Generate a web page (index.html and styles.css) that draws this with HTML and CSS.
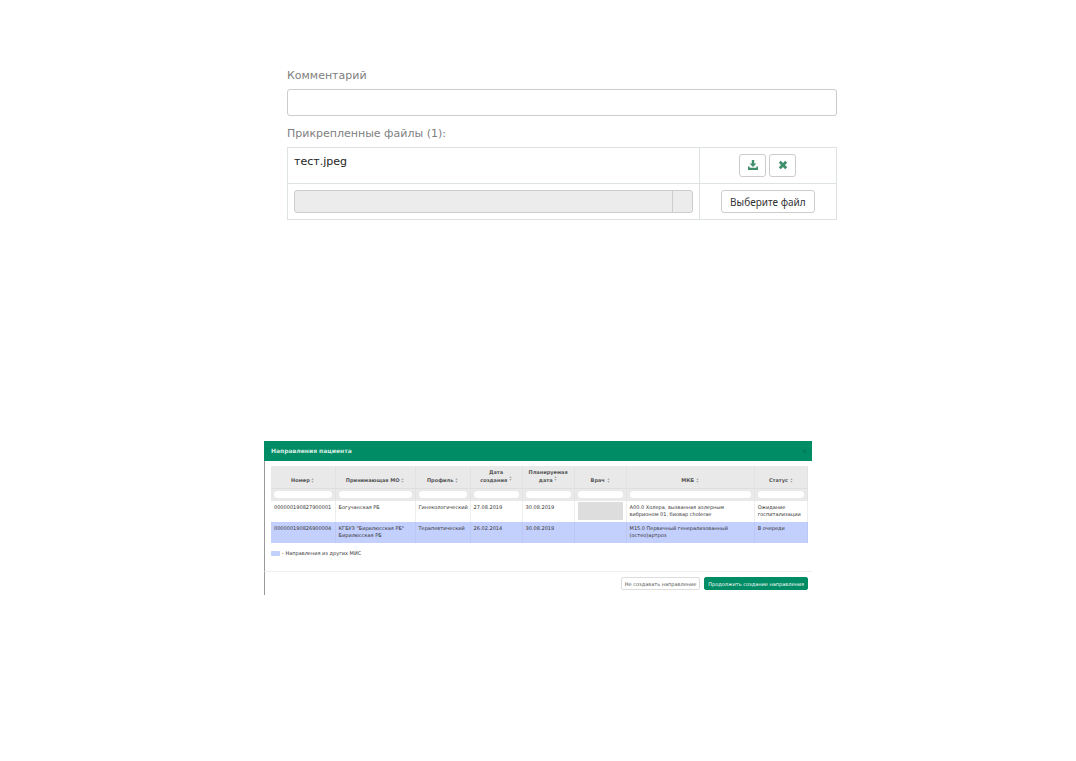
FILE: index.html
```html
<!DOCTYPE html>
<html lang="ru">
<head>
    <meta charset="UTF-8">
    <title>Направления пациента</title>
    <meta name="viewport" content="width=device-width, initial-scale=1.0">
    <link rel="stylesheet" href="styles.css">
</head>
<body>
    <svg class="sprite" aria-hidden="true">
        <symbol id="sort" viewBox="0 0 4 6">
            <path d="M2 0 L3.6 2.4 H0.4 Z M2 6 L0.4 3.6 H3.6 Z"/>
        </symbol>
    </svg>

    <form class="attachments">
        <label class="field-label" for="comment">Комментарий</label>
        <input class="comment" type="text" id="comment">
        <label class="field-label" for="file-name">Прикрепленные файлы (1):</label>
        <table class="files">
            <tr>
                <td class="file-name">тест.jpeg</td>
                <td class="file-actions">
                    <button type="button" class="btn btn-icon" aria-label="Скачать">
                        <svg width="10" height="10" viewBox="0 0 10 10"><path d="M3.8 0h2.4v3.5h2.2L5 7 1.6 3.5h2.2z M0 6.6h1.6v1.2h6.8V6.6H10V10H0z"/></svg>
                    </button>
                    <button type="button" class="btn btn-icon" aria-label="Удалить">
                        <svg width="10" height="10" viewBox="0 0 10 10"><path d="M.8 2.8l2-2L5 3l2.2-2.2 2 2L7 5l2.2 2.2-2 2L5 7 2.8 9.2l-2-2L3 5z"/></svg>
                    </button>
                </td>
            </tr>
            <tr>
                <td>
                    <div class="file-input">
                        <input type="text" id="file-name" disabled>
                        <span class="addon"></span>
                    </div>
                </td>
                <td class="file-actions"><button type="button" class="btn">Выберите файл</button></td>
            </tr>
        </table>
    </form>

    <section class="modal">
        <header class="modal-header">
            <h1>Направления пациента</h1>
            <button type="button" class="close" aria-label="Закрыть">×</button>
        </header>
        <div class="modal-body">
            <table class="referrals">
                <colgroup>
                    <col class="col-number"><col class="col-org"><col class="col-profile"><col class="col-date">
                    <col class="col-date"><col class="col-date"><col class="col-mkb"><col class="col-status">
                </colgroup>
                <thead>
                    <tr>
                        <th>Номер <svg class="sort"><use href="#sort"/></svg></th>
                        <th>Принимающая МО <svg class="sort"><use href="#sort"/></svg></th>
                        <th>Профиль <svg class="sort"><use href="#sort"/></svg></th>
                        <th>Дата<br>создания <svg class="sort sort-up"><use href="#sort"/></svg></th>
                        <th>Планируемая<br>дата <svg class="sort sort-up"><use href="#sort"/></svg></th>
                        <th>Врач <svg class="sort"><use href="#sort"/></svg></th>
                        <th>МКБ <svg class="sort"><use href="#sort"/></svg></th>
                        <th>Статус <svg class="sort"><use href="#sort"/></svg></th>
                    </tr>
                    <tr class="filters">
                        <td><input type="text" aria-label="Номер"></td>
                        <td><input type="text" aria-label="Принимающая МО"></td>
                        <td><input type="text" aria-label="Профиль"></td>
                        <td><input type="text" aria-label="Дата создания"></td>
                        <td><input type="text" aria-label="Планируемая дата"></td>
                        <td><input type="text" aria-label="Врач"></td>
                        <td><input type="text" aria-label="МКБ"></td>
                        <td><input type="text" aria-label="Статус"></td>
                    </tr>
                </thead>
                <tbody>
                    <tr>
                        <td>000000190827900001</td>
                        <td>Богучанская РБ</td>
                        <td>Гинекологический</td>
                        <td>27.08.2019</td>
                        <td>30.08.2019</td>
                        <td class="doctor"><div class="masked"></div></td>
                        <td>A00.0 Холера, вызванная холерным<br>вибрионом 01, биовар cholerae</td>
                        <td>Ожидание<br>госпитализации</td>
                    </tr>
                    <tr class="external">
                        <td>000000190826900004</td>
                        <td>КГБУЗ "Бирилюсская РБ"<br>Бирилюсская РБ</td>
                        <td>Терапевтический</td>
                        <td>26.02.2014</td>
                        <td>30.08.2019</td>
                        <td></td>
                        <td>M15.0 Первичный генерализованный<br>(остео)артроз</td>
                        <td>В очереди</td>
                    </tr>
                </tbody>
            </table>
            <div class="legend"><span class="swatch"></span>- Направления из других МИС</div>
        </div>
        <footer class="modal-footer">
            <button type="button" class="btn-small">Не создавать направление</button>
            <button type="button" class="btn-small btn-primary">Продолжить создание направления</button>
        </footer>
    </section>
</body>
</html>
```

FILE: styles.css
```css
* {
    box-sizing: border-box;
}
body {
    margin: 0;
    padding: 68px 16px;
    background: #fff;
    color: #333;
    font-family: Verdana, "DejaVu Sans", sans-serif;
    font-size: 11px;
}
input, button {
    font-family: inherit;
}
table {
    width: 100%;
    border-collapse: collapse;
}
td, th {
    padding: 0;
}
.sprite {
    position: absolute;
    width: 0;
    height: 0;
}

/* attached files form */
.attachments {
    max-width: 598px;
    margin: 0 auto;
    padding-left: 48px;
}
.field-label {
    display: block;
    line-height: 15px;
    color: #808080;
}
.comment {
    display: block;
    width: 100%;
    height: 27px;
    margin: 6px 0 10px;
    padding: 0 6px;
    border: 1px solid #ccc;
    border-radius: 3px;
    font-size: 11px;
}
.files {
    margin-top: 6px;
}
.files td {
    height: 36px;
    padding: 6px;
    border: 1px solid #dde4df;
}
.files .file-name {
    vertical-align: top;
    line-height: 16px;
    color: #222;
}
.files .file-actions {
    width: 25%;
    text-align: center;
}
.file-actions {
    font-size: 0;
}
.btn {
    height: 23px;
    padding: 0 8px;
    background: #fff;
    border: 1px solid #ccc;
    border-radius: 3px;
    color: #333;
    font-family: "Noto Sans", sans-serif;
    font-size: 10px;
    vertical-align: top;
}
.btn-icon {
    display: inline-flex;
    align-items: center;
    justify-content: center;
    width: 27px;
    padding: 0 0 2px;
    fill: #3f8e6a;
}
.btn-icon + .btn-icon {
    margin-left: 3px;
}
.file-input {
    display: flex;
    height: 23px;
    background: #ececec;
    border: 1px solid #ccc;
    border-radius: 3px;
}
.file-input input {
    flex: 1;
    min-width: 0;
    background: none;
    border: none;
}
.addon {
    width: 20px;
    border-left: 1px solid #ccc;
}

/* referrals dialog */
.modal {
    max-width: 548px;
    margin: 221px auto 0;
    font-size: 5px;
    line-height: 7px;
}
.modal-header {
    display: flex;
    align-items: center;
    justify-content: space-between;
    height: 20px;
    padding: 0 5px 1px 7px;
    background: #008c64;
}
.modal-header h1 {
    margin: 0;
    color: #d5efe5;
    font-size: 6px;
    font-weight: bold;
}
.close {
    padding: 0;
    background: none;
    border: none;
    color: #00694a;
    font-size: 6px;
    line-height: 6px;
}
.modal-body,
.modal-footer {
    border-left: 1px solid #999;
}
.modal-body {
    padding: 5px 4px 14px 6px;
}
.referrals {
    table-layout: fixed;
}
.col-number { width: 12%; }
.col-org { width: 15%; }
.col-profile { width: 55px; }
.col-date { width: 52px; }
.col-mkb { width: 24%; }
.col-status { width: 10%; }
.referrals thead {
    background: #e9e9e9;
}
.referrals th {
    height: 22px;
    padding-bottom: 4px;
    border-right: 1px solid #e2e2e2;
    vertical-align: bottom;
    color: #555;
}
.sort {
    width: 3px;
    height: 5px;
    fill: #aaa;
    vertical-align: -1px;
}
.sort-up {
    vertical-align: 1px;
}
.filters td {
    height: 13px;
    padding: 0 3px;
    border-top: 1px solid #dedede;
    border-right: 1px solid #e2e2e2;
}
.filters input {
    display: block;
    width: 100%;
    height: 7px;
    padding: 0 3px;
    background: #fff;
    border: none;
    border-radius: 4px;
    font-size: 5px;
}
.referrals tbody td {
    height: 21px;
    padding: 3px 0 3px 3px;
    border-right: 1px solid #eee;
    vertical-align: top;
    white-space: nowrap;
}
.referrals tbody .doctor {
    padding: 1px 3px;
}
.masked {
    height: 18px;
    background: #ddd;
}
.referrals .external td {
    background: #c3cffc;
    border-color: #bcc8f4;
}
.legend {
    display: flex;
    align-items: center;
    gap: 2px;
    margin-top: 7px;
}
.swatch {
    width: 9px;
    height: 5px;
    background: #c3cffc;
    border-radius: 1px;
}
.modal-footer {
    display: flex;
    justify-content: flex-end;
    gap: 4px;
    padding: 5px 4px;
    border-top: 1px solid #eee;
}
.btn-small {
    height: 13px;
    padding: 0 3px;
    background: #fff;
    border: 1px solid #ddd;
    border-radius: 2px;
    color: #555;
    font-size: 5px;
}
.btn-primary {
    background: #008c64;
    border-color: #008c64;
    color: #fff;
}
```
